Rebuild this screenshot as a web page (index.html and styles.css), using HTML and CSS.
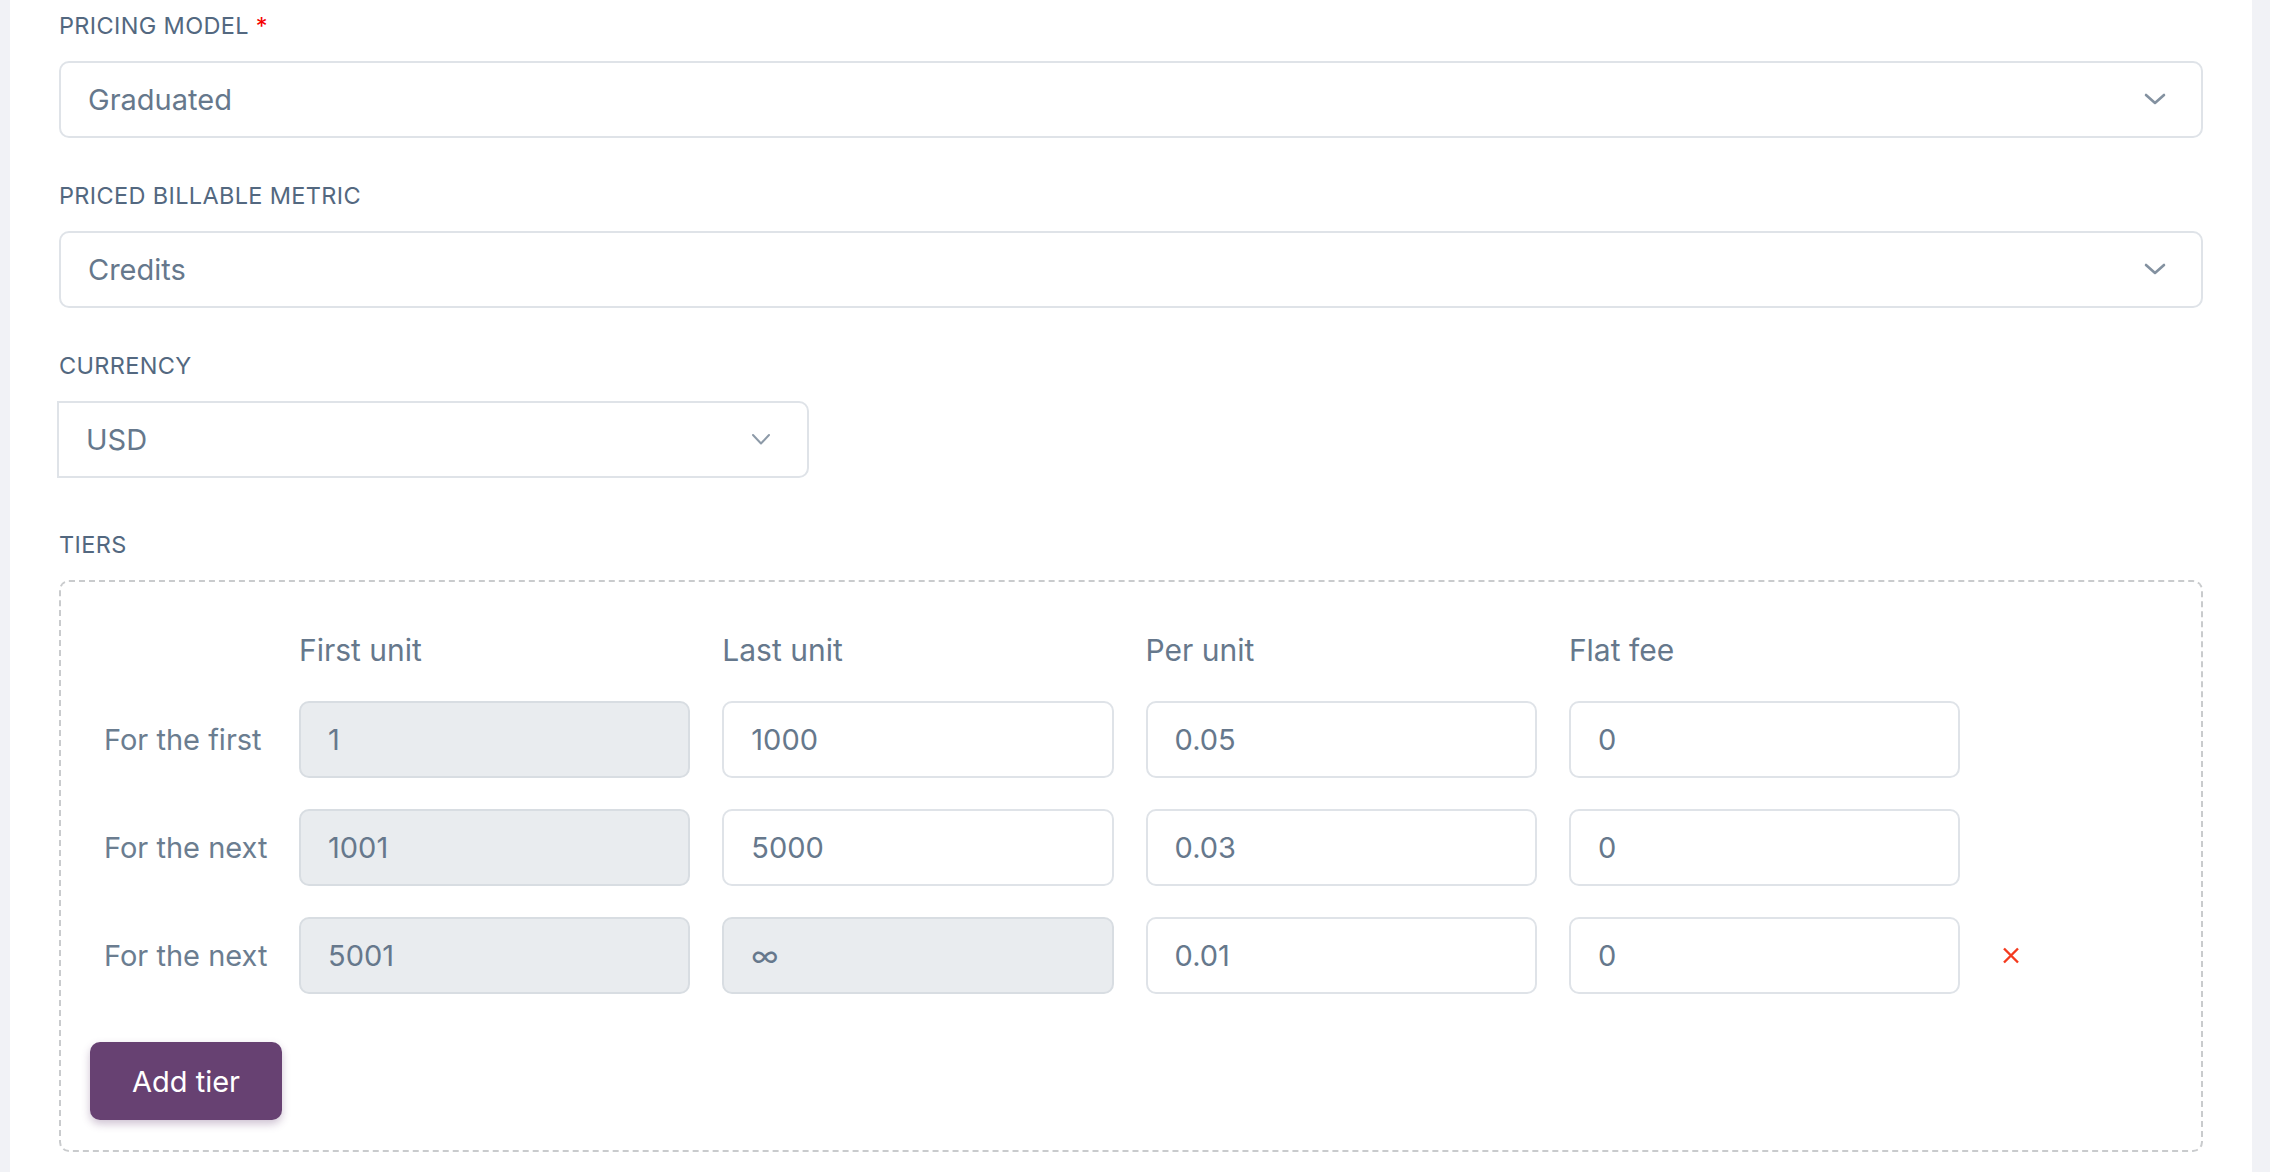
FILE: index.html
```html
<!DOCTYPE html>
<html lang="en">
<head>
<meta charset="utf-8">
<title>Pricing</title>
<link rel="stylesheet" href="styles.css">
</head>
<body>
<div class="panel">
  <div class="field">
    <div class="field-label">PRICING MODEL <span class="req">*</span></div>
    <div class="select">
      <span class="select-value">Graduated</span>
      <svg class="chev" width="22" height="12" viewBox="0 0 22 12"><path d="M2 2 L11 10 L20 2" /></svg>
    </div>
  </div>
  <div class="field">
    <div class="field-label">PRICED BILLABLE METRIC</div>
    <div class="select">
      <span class="select-value">Credits</span>
      <svg class="chev" width="22" height="12" viewBox="0 0 22 12"><path d="M2 2 L11 10 L20 2" /></svg>
    </div>
  </div>
  <div class="field">
    <div class="field-label">CURRENCY</div>
    <div class="select select-currency">
      <span class="select-value">USD</span>
      <svg class="chev chev-thin" width="20" height="12" viewBox="0 0 20 12"><path d="M2 2 L10 10.5 L18 2" /></svg>
    </div>
  </div>
  <div class="field field-tiers">
    <div class="field-label">TIERS</div>
    <div class="tiers-box">
      <div class="tiers-grid">
        <div class="th"></div>
        <div class="th">First unit</div>
        <div class="th">Last unit</div>
        <div class="th">Per unit</div>
        <div class="th">Flat fee</div>
        <div class="th"></div>

        <div class="row-label">For the first</div>
        <div class="inp inp-disabled">1</div>
        <div class="inp">1000</div>
        <div class="inp">0.05</div>
        <div class="inp">0</div>
        <div class="cell-x"></div>

        <div class="row-label">For the next</div>
        <div class="inp inp-disabled">1001</div>
        <div class="inp">5000</div>
        <div class="inp">0.03</div>
        <div class="inp">0</div>
        <div class="cell-x"></div>

        <div class="row-label">For the next</div>
        <div class="inp inp-disabled">5001</div>
        <div class="inp inp-disabled">∞</div>
        <div class="inp">0.01</div>
        <div class="inp">0</div>
        <div class="cell-x">
          <svg class="remove" width="18" height="17" viewBox="0 0 18 17"><path d="M2 1.5 L16 15.5 M16 1.5 L2 15.5" /></svg>
        </div>
      </div>
      <button class="btn-add" type="button">Add tier</button>
    </div>
  </div>
</div>
</body>
</html>
```

FILE: styles.css
```css
* {
  box-sizing: border-box;
}

body {
  margin: 0;
  background: #f1f2f6;
  font-family: Inter, "Noto Sans", sans-serif;
  color: #66788c;
}

.panel {
  margin-left: 10px;
  width: 2242px;
  min-height: 1172px;
  background: #ffffff;
  padding: 11.5px 49px 40px;
}

.field + .field {
  margin-top: 44px;
}

.field-tiers {
  margin-top: 53px !important;
}

.field-label {
  font-size: 23.5px;
  line-height: 28px;
  color: #536880;
  margin-bottom: 21px;
  letter-spacing: 0.35px;
}

.req {
  color: #f50000;
}

.select {
  height: 77px;
  border: 2px solid #dfe3e8;
  border-radius: 10px;
  display: flex;
  align-items: center;
  justify-content: space-between;
  padding: 0 35px 0 27px;
  font-size: 29px;
  color: #66788c;
}

.chev path {
  fill: none;
  stroke: #8391a0;
  stroke-width: 2.6;
  stroke-linecap: round;
  stroke-linejoin: round;
}

.select-currency {
  width: 752px;
  margin-left: -2px;
  border-radius: 0 10px 10px 0;
  padding-right: 36px;
}

.chev-thin path {
  stroke: #8d9aa8;
  stroke-width: 2;
}

.tiers-box {
  border: 2px dashed #c9cbcd;
  border-radius: 10px;
  padding: 51px 29px 29.5px;
}

.tiers-grid {
  display: grid;
  grid-template-columns: 163px 391.3px 391.3px 391.3px 391.3px auto;
  column-gap: 32px;
  row-gap: 31px;
  margin-left: 14px;
  align-items: center;
}

.th {
  font-size: 30px;
  line-height: 35px;
  padding-bottom: 2.5px;
  align-self: start;
  color: #66788c;
}

.row-label {
  font-size: 29px;
  white-space: nowrap;
  color: #6b7d90;
}

.inp {
  height: 77px;
  border: 2px solid #dfe3e8;
  border-radius: 10px;
  display: flex;
  align-items: center;
  padding-left: 27px;
  font-size: 29px;
  color: #66788c;
  background: #ffffff;
}

.inp-disabled {
  background: #e9ecef;
  border-color: #d8dde2;
}

.cell-x {
  display: flex;
  align-items: center;
  padding-left: 10px;
}

.remove path {
  fill: none;
  stroke: #f43a1e;
  stroke-width: 2.4;
  stroke-linecap: butt;
}

.btn-add {
  display: block;
  margin-top: 48px;
  height: 78px;
  padding: 0 42px;
  border: none;
  border-radius: 10px;
  background: #674172;
  color: #ffffff;
  font-family: Inter, "Noto Sans", sans-serif;
  font-size: 29px;
  box-shadow: 0 4px 9px rgba(103, 65, 114, 0.32);
  cursor: pointer;
}
```
